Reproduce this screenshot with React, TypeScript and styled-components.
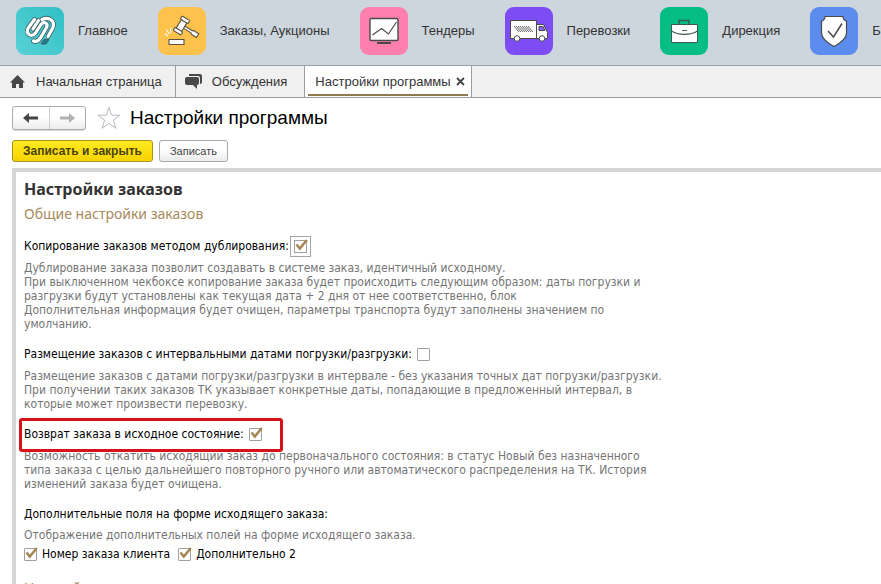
import React, { useState } from 'react';
import styled, { createGlobalStyle, css } from 'styled-components';

const Global = createGlobalStyle`
  *, *::before, *::after { box-sizing: border-box; }
  body { margin: 0; background: #fff; font-family: "Liberation Sans", Arial, sans-serif; color: #333; }
  button, input { font: inherit; margin: 0; }
`;

const Page = styled.div`
  display: flex;
  flex-direction: column;
  height: 100vh;
  overflow: hidden;
`;

const Sections = styled.nav`
  display: flex;
  gap: 30px;
  flex: none;
  height: 66px;
  padding: 7px 0 0 16px;
  overflow: hidden;
  background: #cdd5dd;
  border-bottom: 1px solid #9aa0a6;
`;

const Section = styled.a`
  display: flex;
  align-items: center;
  gap: 14px;
  flex: none;
  height: 48px;
  color: #333;
  font-size: 13px;
  line-height: 18px;
  white-space: nowrap;
  text-decoration: none;
`;

const Tile = styled.span<{ $bg: string }>`
  display: block;
  width: 48px;
  height: 48px;
  border-radius: 9px;
  background: ${(p) => p.$bg};
  svg { display: block; }
`;

const Tabs = styled.div`
  display: flex;
  flex: none;
  height: 32px;
  background: #f0f0f0;
  border-bottom: 1px solid #9c9c9c;
`;

const Tab = styled.div<{ $kind: 'home' | 'page' | 'active' }>`
  display: flex;
  align-items: center;
  padding: ${(p) => ({ home: '0 13px 0 9px', page: '0 17px 0 9px', active: '0 3px' })[p.$kind]};
  border-right: 1px solid #9c9c9c;
  background: ${(p) => (p.$kind === 'active' ? '#fff' : 'transparent')};
`;

const TabButton = styled.button`
  display: flex;
  align-items: center;
  gap: 10px;
  padding: 0;
  border: 0;
  background: none;
  color: #333;
  font-size: 13px;
  line-height: 18px;
  white-space: nowrap;
`;

const ActiveTab = styled.div`
  display: flex;
  align-items: center;
  gap: 5px;
  height: 28px;
  padding: 2px 3px 0 7px;
  border-bottom: 2px solid #8f7a4f;
`;

const CloseButton = styled.button`
  display: flex;
  padding: 0;
  border: 0;
  background: none;
`;

const Header = styled.header`
  display: flex;
  align-items: center;
  flex: none;
  padding: 8px 12px 0;
`;

const History = styled.div`
  display: flex;
  width: 74px;
  height: 24px;
  border: 1px solid #ababab;
  border-radius: 3px;
  background: linear-gradient(#fff 40%, #ececec);
  box-shadow: 0 1px 0 #d8d8d8;
`;

const HistoryButton = styled.button`
  display: flex;
  flex: 1;
  align-items: center;
  justify-content: center;
  padding: 0;
  border: 0;
  background: none;
  & + & { border-left: 1px solid #cfcfcf; }
`;

const StarButton = styled.button`
  display: flex;
  margin: 0 9px 0 11px;
  padding: 0;
  border: 0;
  background: none;
`;

const Title = styled.h1`
  margin: 0;
  color: #000;
  font-size: 19px;
  font-weight: 400;
  line-height: 24px;
`;

const Commands = styled.div`
  display: flex;
  gap: 6px;
  flex: none;
  padding: 10px 12px 6px;
`;

const Command = styled.button<{ $primary?: boolean }>`
  height: 22px;
  padding: 0 10px;
  border: 1px solid #a9a9a9;
  border-radius: 3px;
  background: linear-gradient(#fff 40%, #ebebeb);
  color: #444;
  font-size: 11px;
  line-height: 18px;
  ${(p) =>
    p.$primary &&
    css`
      border-color: #a8921c;
      background: linear-gradient(#ffe91f, #f5d400);
      color: #4a4310;
      font-size: 12px;
      font-weight: 700;
    `}
`;

const Form = styled.main`
  flex: 1;
  min-height: 0;
  margin-left: 12px;
  padding: 7px 8px 0;
  overflow: hidden;
  border-top: 4px solid #d6d6d6;
  border-left: 4px solid #d6d6d6;
  font-family: "DejaVu Sans Condensed", "DejaVu Sans", sans-serif;
  font-size: 12px;
  line-height: 14px;
`;

const GroupTitle = styled.h2`
  margin: 0;
  font-family: "Noto Sans", sans-serif;
  font-size: 16px;
  font-weight: 700;
  line-height: 20px;
`;

const SubTitle = styled.h3<{ $next?: boolean }>`
  margin: ${(p) => (p.$next ? '16px' : '7px')} 0 0;
  color: #a68a5e;
  font-family: "Noto Sans", sans-serif;
  font-size: 14px;
  font-weight: 400;
  line-height: 16px;
`;

const Setting = styled.section`
  margin-top: 14px;
  & + & { margin-top: 13px; }
`;

const Row = styled.div<{ $marked?: boolean }>`
  display: flex;
  align-items: center;
  gap: 5px;
  position: relative;
  height: 20px;
  color: #000;
  white-space: nowrap;
  ${(p) =>
    p.$marked &&
    css`
      &::after {
        content: '';
        position: absolute;
        top: -6px;
        left: -5px;
        width: 264px;
        height: 34px;
        border: 3px solid #d8121a;
        border-radius: 3px;
        pointer-events: none;
      }
    `}
`;

const Hint = styled.p<{ $tight?: boolean }>`
  max-width: 680px;
  margin: ${(p) => (p.$tight ? '4px 0 2px' : '5px 0 0')};
  color: #757575;
`;

const Box = styled.input<{ $focused?: boolean }>`
  appearance: none;
  width: 13px;
  height: 13px;
  border: 1px solid #a0a0a0;
  border-radius: ${(p) => (p.$focused ? '0' : '1px')};
  background: #fff;
  outline: ${(p) => (p.$focused ? '1px solid #a5a5a5' : 'none')};
  outline-offset: 3px;
`;

const BoxFrame = styled.span`
  display: inline-flex;
  position: relative;
  svg { position: absolute; left: 1px; top: -1px; pointer-events: none; }
`;

const Choices = styled.div`
  display: flex;
  gap: 8px;
  color: #000;
`;

const Choice = styled.div`
  display: flex;
  align-items: center;
  gap: 5px;
  height: 20px;
`;

function Check({ id, initial, focused }: { id: string; initial?: boolean; focused?: boolean }) {
  const [on, setOn] = useState(!!initial);
  return (
    <BoxFrame>
      <Box id={id} type="checkbox" checked={on} $focused={focused} onChange={() => setOn(!on)} />
      {on && (
        <svg width="13" height="13" viewBox="0 0 13 13" fill="none" stroke="#a58450" strokeWidth="2.4">
          <path d="M1.5 5.5 4.8 9.5 11.8 1" />
        </svg>
      )}
    </BoxFrame>
  );
}

const ink = '#4a4a4a';

const LogoIcon = () => (
  <svg width="48" height="48" viewBox="0 0 48 48" fill="none" strokeLinejoin="round">
    <path d="M28 32.500h5l-3 4.500h-5z" fill="#1d7e8c" stroke="#3b6268" />
    {[{ c: '#3b6268', w: 4.8 }, { c: '#fff', w: 3.2 }].map((s) => (
      <g key={s.c} stroke={s.c} strokeWidth={s.w} strokeLinecap="round">
        <path d="M18.500 12.500 12.500 20.500C9 26 15 31.500 19.500 26L25 17.500C28 13.500 32.500 16.500 30.500 20.500L25 30C23 33.500 21 35.500 17.500 34" />
        <path d="M26 12.500C33 9 40 14.500 36.500 21.500L32 29.500" />
        <path d="M22.500 13.500 17 22" />
      </g>
    ))}
  </svg>
);

const GavelIcon = () => (
  <svg width="48" height="48" viewBox="0 0 48 48" fill="#fff" stroke="#5a5145" strokeWidth="1.1" strokeLinejoin="round">
    <g transform="translate(23.5 18.5) rotate(32)">
      <path d="M3 -1.200h9l1-1h6v4.400h-6l-1-1H3z" />
      <rect x="-3.200" y="-6" width="6.400" height="12" />
      <rect x="-4.500" y="-8.500" width="9" height="3.600" rx="1" />
      <rect x="-4.500" y="4.900" width="9" height="3.600" rx="1" />
    </g>
    <path d="M11 32.500h15v5H11z" />
    <path d="m7 26.500 3 2.500M8 22.500l3.500 4.500M12.500 21l.5 5" stroke="#fff" />
  </svg>
);

const ChartIcon = () => (
  <svg width="48" height="48" viewBox="0 0 48 48" fill="none" stroke={ink}>
    <rect x="10" y="11.500" width="28" height="22" rx="1" fill="#fff" strokeWidth="1.400" />
    <path d="m12.500 28 9-6.500 7 5.500 8-12" strokeWidth="1.200" />
    <path d="M17 36h14" strokeWidth="2" />
  </svg>
);

const TruckIcon = () => (
  <svg width="48" height="48" viewBox="0 0 48 48" fill="#fff" stroke={ink} strokeWidth="1">
    <path d="M5.500 13.500h26v18h-26zM31.500 17.500h7l3 6 1 2v6h-11z" />
    <path d="M34 19.500h4l2 4h-6z" fill="#8a5cf0" />
    <path d="m9 19 5 6m-3-6 5 6m-3-6 5 6m-3-6 5 6m-3-6 5 6m-3-6 5 6m-3-6 5 6m-3-6 5 6" strokeWidth=".8" />
    <circle cx="12" cy="31.500" r="2.800" />
    <circle cx="37" cy="31.500" r="2.800" />
  </svg>
);

const CaseIcon = () => (
  <svg width="48" height="48" viewBox="0 0 48 48" fill="#fff" stroke="#3d5a50">
    <path d="M19 17v-3.500h10V17" fill="none" strokeWidth="1.400" />
    <path d="M11.500 17.500h26v18h-26z" />
    <path d="M11.500 24c7 4.500 19 4.500 26 0M22 23.500h5" fill="none" strokeWidth="1.200" />
  </svg>
);

const ShieldIcon = () => (
  <svg width="48" height="48" viewBox="0 0 48 48" fill="#fff" stroke={ink} strokeWidth="1.200">
    <path d="M15 9.500h18c0 2.500 1.500 4 3.500 4.500V26c0 6-6 10-12.500 13.500C17.500 36 11.500 32 11.500 26V14c2-.5 3.500-2 3.500-4.500z" />
    <path d="m18 24 5.500 6L32 16.500" fill="none" strokeWidth="1.500" />
  </svg>
);

const sections = [
  { name: 'Главное', bg: 'linear-gradient(45deg, #58d2d6, #2fbfc5)', icon: <LogoIcon /> },
  { name: 'Заказы, Аукционы', bg: '#fdc24b', icon: <GavelIcon /> },
  { name: 'Тендеры', bg: '#ff80ad', icon: <ChartIcon /> },
  { name: 'Перевозки', bg: '#7d4cf5', icon: <TruckIcon /> },
  { name: 'Дирекция', bg: '#06bd83', icon: <CaseIcon /> },
  { name: 'Безопасность', bg: '#5b8cee', icon: <ShieldIcon /> },
];

export default function App() {
  return (
    <Page>
      <Global />
      <Sections>
        {sections.map((s) => (
          <Section href="#" key={s.name}>
            <Tile $bg={s.bg}>{s.icon}</Tile>
            {s.name}
          </Section>
        ))}
      </Sections>
      <Tabs>
        <Tab $kind="home">
          <TabButton>
            <svg width="17" height="16" viewBox="0 0 17 16" fill="#484848">
              <path d="M8.500 1 1 8.500h2V14h4v-4h3v4h4V8.500h2z" />
            </svg>
            Начальная страница
          </TabButton>
        </Tab>
        <Tab $kind="page">
          <TabButton>
            <svg width="17" height="16" viewBox="0 0 17 16" fill="#484848">
              <path d="M4 0h11q2 0 2 2v6q0 2-2 2V4q0-2-2-2H4z" />
              <path d="M2 3h10q2 0 2 2v4q0 2-2 2v4l-4-4H2q-2 0-2-2V5q0-2 2-2z" />
            </svg>
            Обсуждения
          </TabButton>
        </Tab>
        <Tab $kind="active">
          <ActiveTab>
            <TabButton>Настройки программы</TabButton>
            <CloseButton aria-label="Закрыть">
              <svg width="9" height="9" viewBox="0 0 9 9" stroke="#444" strokeWidth="1.800">
                <path d="m1 1 7 7M8 1 1 8" />
              </svg>
            </CloseButton>
          </ActiveTab>
        </Tab>
      </Tabs>
      <Header>
        <History>
          <HistoryButton aria-label="Назад">
            <svg width="15" height="10" viewBox="0 0 15 10" fill="#444"><path d="M0 5 6 0v3.500h9v3H6V10z" /></svg>
          </HistoryButton>
          <HistoryButton aria-label="Вперед">
            <svg width="15" height="10" viewBox="0 0 15 10" fill="#b0b0b0"><path d="M15 5 9 0v3.500H0v3h9V10z" /></svg>
          </HistoryButton>
        </History>
        <StarButton aria-label="В избранное">
          <svg width="24" height="24" viewBox="0 0 24 24" fill="#fff" stroke="#b4bac0">
            <path d="m12 1.500 2.600 7.700H23l-6.700 4.900 2.700 8.200-7-5-7 5 2.700-8.200L1 9.200h8.400z" />
          </svg>
        </StarButton>
        <Title>Настройки программы</Title>
      </Header>
      <Commands>
        <Command $primary>Записать и закрыть</Command>
        <Command>Записать</Command>
      </Commands>
      <Form>
        <GroupTitle>Настройки заказов</GroupTitle>
        <SubTitle>Общие настройки заказов</SubTitle>
        <Setting>
          <Row>
            <label htmlFor="copy">Копирование заказов методом дублирования:</label>
            <Check id="copy" initial focused />
          </Row>
          <Hint>
            Дублирование заказа позволит создавать в системе заказ, идентичный исходному.<br />
            При выключенном чекбоксе копирование заказа будет происходить следующим образом: даты погрузки и<br />
            разгрузки будут установлены как текущая дата + 2 дня от нее соответственно, блок<br />
            Дополнительная информация будет очищен, параметры транспорта будут заполнены значением по<br />
            умолчанию.
          </Hint>
        </Setting>
        <Setting>
          <Row>
            <label htmlFor="interval">Размещение заказов с интервальными датами погрузки/разгрузки:</label>
            <Check id="interval" />
          </Row>
          <Hint>
            Размещение заказов с датами погрузки/разгрузки в интервале - без указания точных дат погрузки/разгрузки.<br />
            При получении таких заказов ТК указывает конкретные даты, попадающие в предложенный интервал, в<br />
            которые может произвести перевозку.
          </Hint>
        </Setting>
        <Setting>
          <Row $marked>
            <label htmlFor="rollback">Возврат заказа в исходное состояние:</label>
            <Check id="rollback" initial />
          </Row>
          <Hint>
            Возможность откатить исходящий заказ до первоначального состояния: в статус Новый без назначенного<br />
            типа заказа с целью дальнейшего повторного ручного или автоматического распределения на ТК. История<br />
            изменений заказа будет очищена.
          </Hint>
        </Setting>
        <Setting>
          <Row>Дополнительные поля на форме исходящего заказа:</Row>
          <Hint $tight>Отображение дополнительных полей на форме исходящего заказа.</Hint>
          <Choices>
            <Choice>
              <Check id="number" initial />
              <label htmlFor="number">Номер заказа клиента</label>
            </Choice>
            <Choice>
              <Check id="extra" initial />
              <label htmlFor="extra">Дополнительно 2</label>
            </Choice>
          </Choices>
        </Setting>
        <SubTitle $next>Настройки</SubTitle>
      </Form>
    </Page>
  );
}
